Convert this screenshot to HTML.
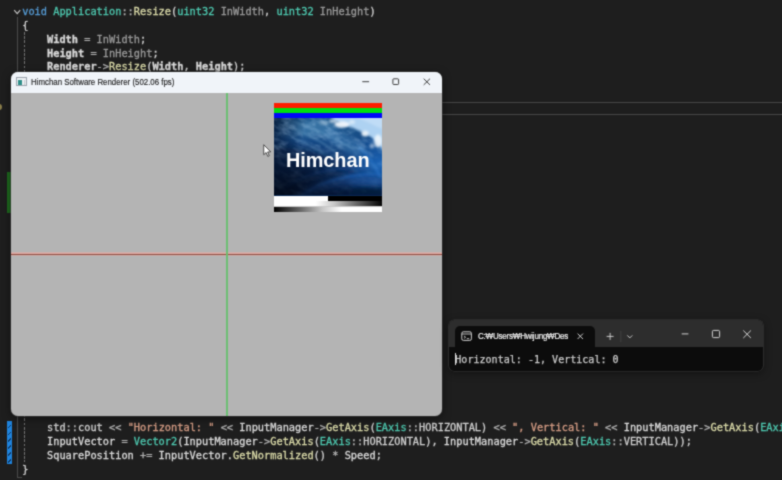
<!DOCTYPE html>
<html lang="en">
<head>
<meta charset="utf-8">
<title>Himchan Software Renderer</title>
<style>
html,body{margin:0;padding:0;}
body{width:782px;height:480px;overflow:hidden;background:#1e1e1e;position:relative;font-family:"Liberation Sans",sans-serif;}
#stage{position:absolute;left:-4px;top:-4px;width:790px;height:488px;overflow:hidden;background:#1e1e1e;filter:url(#soft);}
#in{position:absolute;left:4px;top:4px;width:782px;height:480px;}
.code{position:absolute;left:22.2px;white-space:pre;font-family:"DejaVu Sans Mono","Liberation Mono",monospace;font-size:10.3px;line-height:13.75px;height:13.75px;color:#d4d4d4;letter-spacing:0;-webkit-text-stroke:0.3px currentColor;}
.k{color:#569cd6}.t{color:#4ec9b0}.f{color:#dcdcaa}.p{color:#9a9a9a}.m{color:#dadada;font-weight:bold}.s{color:#d69d85}.o{color:#b4b4b4}.v{color:#d0d0d0}.w{color:#dcdcdc}
.abs{position:absolute}
</style>
</head>
<body>
<svg width="0" height="0" style="position:absolute"><defs><filter id="soft" x="0" y="0" width="100%" height="100%" color-interpolation-filters="sRGB"><feConvolveMatrix order="3" kernelMatrix="1 3 1 3 12 3 1 3 1" divisor="28" edgeMode="duplicate" preserveAlpha="true"/></filter></defs></svg>
<div id="stage"><div id="in">

<!-- editor current-line box -->
<div class="abs" style="left:18px;top:102.2px;width:790px;height:11.3px;border:1px solid #464646;"></div>

<!-- margin indicators -->
<div class="abs" style="left:-4px;top:103.5px;width:6px;height:6.5px;border-radius:50%;background:#8a7d4a;"></div>
<div class="abs" style="left:7px;top:172px;width:4px;height:41px;background:#1e6b1e;"></div>
<div class="abs" style="left:7px;top:421px;width:4.5px;height:42.5px;background:#1f83dc;"><div class="abs" style="left:1px;top:1px;right:1px;bottom:1px;background:repeating-linear-gradient(135deg,#1f83dc 0 3.6px,#0f3a66 3.6px 4.9px);"></div></div>

<!-- structure guide lines -->
<div class="abs" style="left:16.5px;top:17px;width:1px;height:460px;background:#4a4a4a;"></div>
<div class="abs" style="left:16.5px;top:476.5px;width:5px;height:1px;background:#4a4a4a;"></div>
<div class="abs" style="left:24px;top:32px;width:1px;height:430px;background:repeating-linear-gradient(180deg,#727272 0 2.8px,transparent 2.8px 4.2px);"></div>

<!-- fold chevron -->
<svg class="abs" style="left:13px;top:8px" width="9" height="8" viewBox="0 0 9 8"><path d="M1.2 2.2 L4.2 5.6 L7.2 2.2" fill="none" stroke="#c8c8c8" stroke-width="1.1"/></svg>

<!-- code, top -->
<div class="code" style="top:5.30px"><span class="k">void</span> <span class="t">Application</span><span class="o">::</span><span class="f">Resize</span>(<span class="t">uint32</span> <span class="p">InWidth</span>, <span class="t">uint32</span> <span class="p">InHeight</span>)</div>
<div class="code" style="top:19.05px">{</div>
<div class="code" style="top:32.80px">    <span class="m">Width</span> <span class="o">=</span> <span class="p">InWidth</span>;</div>
<div class="code" style="top:46.55px">    <span class="m">Height</span> <span class="o">=</span> <span class="p">InHeight</span>;</div>
<div class="code" style="top:60.30px">    <span class="m">Renderer</span><span class="o">-&gt;</span><span class="f">Resize</span>(<span class="m">Width</span>, <span class="m">Height</span>);</div>

<!-- code, bottom -->
<div class="code" style="top:421.30px">    <span class="v">std</span><span class="o">::</span><span class="v">cout</span> <span class="o">&lt;&lt;</span> <span class="s">"Horizontal: "</span> <span class="o">&lt;&lt;</span> <span class="w">InputManager</span><span class="o">-&gt;</span><span class="f">GetAxis</span>(<span class="t">EAxis</span><span class="o">::</span><span class="v">HORIZONTAL</span>) <span class="o">&lt;&lt;</span> <span class="s">", Vertical: "</span> <span class="o">&lt;&lt;</span> <span class="w">InputManager</span><span class="o">-&gt;</span><span class="f">GetAxis</span>(<span class="t">EAxis</span><span class="o">::</span><span class="v">VERTICAL</span>) <span class="o">&lt;&lt;</span> <span class="v">std</span><span class="o">::</span><span class="f">endl</span>;</div>
<div class="code" style="top:435.10px">    <span class="w">InputVector</span> <span class="o">=</span> <span class="t">Vector2</span>(<span class="w">InputManager</span><span class="o">-&gt;</span><span class="f">GetAxis</span>(<span class="t">EAxis</span><span class="o">::</span><span class="v">HORIZONTAL</span>), <span class="w">InputManager</span><span class="o">-&gt;</span><span class="f">GetAxis</span>(<span class="t">EAxis</span><span class="o">::</span><span class="v">VERTICAL</span>));</div>
<div class="code" style="top:448.90px">    <span class="w">SquarePosition</span> <span class="o">+=</span> <span class="w">InputVector</span>.<span class="f">GetNormalized</span>() <span class="o">*</span> <span class="w">Speed</span>;</div>
<div class="code" style="top:462.70px">}</div>

<!-- Himchan window -->
<div class="abs" id="win" style="left:10.5px;top:72px;width:431.5px;height:344px;border-radius:7px;background:#b4b4b4;overflow:hidden;box-shadow:0 0 0 0.5px #3a3a3a, 0 2px 8px rgba(0,0,0,.5);">
  <div class="abs" style="left:0;top:0;width:100%;height:20.5px;background:#f0f4f9;"></div>
  <!-- app icon -->
  <div class="abs" style="left:5.6px;top:5.2px;width:11px;height:8.8px;background:#eef1f4;border:0.5px solid #9aa3ad;box-sizing:border-box;">
    <div class="abs" style="left:1.4px;top:2.2px;width:3.6px;height:4.8px;background:#2f8f8a;"></div>
    <div class="abs" style="left:7px;top:2.2px;width:1.3px;height:4.8px;background:#c9ced4;"></div>
  </div>
  <div class="abs" style="left:20px;top:4.3px;font-size:8.9px;line-height:12px;color:#1b1b1b;white-space:pre;-webkit-text-stroke:0.15px #1b1b1b;transform:scaleX(0.886);transform-origin:0 50%;">Himchan Software Renderer (502.06 fps)</div>
  <!-- controls -->
  <svg class="abs" style="left:345px;top:0" width="86" height="21" viewBox="0 0 86 21">
    <path d="M6.3 9.7 H13.1" stroke="#2a2a2a" stroke-width="0.9" fill="none"/>
    <rect x="36.9" y="6.8" width="5.7" height="5.7" rx="0.8" fill="none" stroke="#2a2a2a" stroke-width="0.9"/>
    <path d="M67.7 6.7 L74 12.9 M74 6.7 L67.7 12.9" stroke="#2a2a2a" stroke-width="0.9" fill="none"/>
  </svg>
  <!-- axes -->
  <div class="abs" style="left:0;top:180.2px;width:100%;height:4px;background:linear-gradient(180deg,rgba(226,168,160,0.25),#e0aaa2 30%,#e0aaa2 70%,rgba(226,168,160,0.25));"></div>
  <div class="abs" style="left:0;top:181.55px;width:100%;height:1.4px;background:#8e4e44;"></div>
  <div class="abs" style="left:215.3px;top:20.5px;width:2.4px;height:324px;background:linear-gradient(90deg,rgba(104,192,112,0.35),#66c06e 25%,#66c06e 75%,rgba(104,192,112,0.35));opacity:.92;"></div>

  <!-- texture -->
  <div class="abs" id="tex" style="left:263.2px;top:30.5px;width:108.4px;height:109.2px;overflow:hidden;background:#0a2a55;">
    <div class="abs" style="left:0;top:0;width:109px;height:5.2px;background:#ff1c00;"></div>
    <div class="abs" style="left:0;top:5px;width:109px;height:5.5px;background:#00e010;"></div>
    <div class="abs" style="left:0;top:10.5px;width:109px;height:4.8px;background:#0008f8;"></div>
    <svg class="abs" style="left:0;top:15.3px" width="109" height="77.6" viewBox="0 0 109 77.6">
      <defs>
        <linearGradient id="g1" x1="0" y1="0" x2="0" y2="1">
          <stop offset="0" stop-color="#1f5a8c"/><stop offset="0.3" stop-color="#144885"/><stop offset="0.6" stop-color="#0c3166"/><stop offset="1" stop-color="#061c44"/>
        </linearGradient>
        <radialGradient id="g2" cx="0" cy="1" r="0.75">
          <stop offset="0" stop-color="#01050e" stop-opacity=".95"/><stop offset="0.55" stop-color="#020a1c" stop-opacity=".6"/><stop offset="1" stop-color="#020a1c" stop-opacity="0"/>
        </radialGradient>
        <linearGradient id="g4" x1="0" y1="0" x2="1" y2="0.15"><stop offset="0" stop-color="#03122c" stop-opacity=".75"/><stop offset="0.3" stop-color="#03122c" stop-opacity="0"/></linearGradient>
        <radialGradient id="g3" cx="0.98" cy="0.6" r="0.4">
          <stop offset="0" stop-color="#1d6cc4" stop-opacity=".9"/><stop offset="1" stop-color="#1d6cc4" stop-opacity="0"/>
        </radialGradient>
        <filter id="bl" x="-20%" y="-20%" width="140%" height="140%"><feGaussianBlur stdDeviation="2.4"/></filter>
        <filter id="bl2" x="-20%" y="-20%" width="140%" height="140%"><feGaussianBlur stdDeviation="1"/></filter>
        <filter id="tx" x="0" y="0" width="100%" height="100%">
          <feTurbulence type="fractalNoise" baseFrequency="0.09 0.16" numOctaves="3" seed="7"/>
          <feColorMatrix type="matrix" values="0 0 0 0 0.5  0 0 0 0 0.72  0 0 0 0 0.95  1.8 0 0 0 -0.72"/>
          <feGaussianBlur stdDeviation="0.5"/>
        </filter>
        <linearGradient id="mg" x1="0" y1="0" x2="0" y2="1"><stop offset="0" stop-color="#fff"/><stop offset="0.35" stop-color="#bbb"/><stop offset="0.6" stop-color="#444"/><stop offset="1" stop-color="#222"/></linearGradient><mask id="mk"><rect width="109" height="77.6" fill="url(#mg)"/></mask>
        <clipPath id="cp"><rect width="109" height="77.6"/></clipPath>
      </defs>
      <g clip-path="url(#cp)">
      <rect width="109" height="77.6" fill="url(#g1)"/>
      <rect width="109" height="77.6" fill="url(#g3)"/>
      <g filter="url(#bl)">
        <ellipse cx="40" cy="11" rx="22" ry="8" fill="#4f8dbb" opacity=".5"/>
        <ellipse cx="70" cy="24" rx="22" ry="8" fill="#3f7db4" opacity=".55" transform="rotate(28 70 24)"/>
        <path d="M-5 30 C20 28 50 34 80 48 L80 56 C50 46 20 40 -5 44 Z" fill="#0a2c5e" opacity=".7"/>
        <path d="M20 78 C40 62 70 56 109 58 L109 68 C80 64 50 68 36 78 Z" fill="#1c56a0" opacity=".55"/>
        <path d="M60 78 C75 70 90 68 109 70 L109 78 Z" fill="#06183a" opacity=".8"/>
      </g>
      <g filter="url(#bl2)" fill="none" stroke-linecap="round">
        <path d="M4 6 C20 10 40 18 62 34" stroke="#7fb4d8" stroke-width="1.6" opacity=".45"/>
        <path d="M14 2 C34 8 54 16 78 30" stroke="#8cc0e0" stroke-width="1.4" opacity=".4"/>
        <path d="M2 16 C18 18 36 26 52 38" stroke="#5f9cc8" stroke-width="1.6" opacity=".35"/>
        <path d="M30 76 C50 62 76 56 106 56" stroke="#1f62b8" stroke-width="3" opacity=".55"/>
        <path d="M10 70 C30 56 56 50 84 50" stroke="#184f9c" stroke-width="2.4" opacity=".5"/>
        <path d="M86 30 C94 38 100 46 106 58" stroke="#2a78cc" stroke-width="3" opacity=".5"/>
      </g>
      <rect width="109" height="77.6" fill="url(#g2)"/>
      <rect width="109" height="77.6" fill="url(#g4)"/>
      <g mask="url(#mk)"><g transform="rotate(18 54 38)"><rect x="-20" y="-20" width="150" height="120" filter="url(#tx)" opacity=".55"/></g></g>
      <g filter="url(#bl2)">
        <path d="M56 -2 L112 -2 L112 38 C108 30 102 22 94 17 C86 12 76 9 68 6 C63 4 59 1 56 -2 Z" fill="#aed2f2"/>
        <path d="M80 -2 L112 -2 L112 12 C100 8 90 2 80 -2 Z" fill="#c4def6" opacity=".8"/>
      </g>
      <g filter="url(#bl2)" fill="#f2f8fd">
        <ellipse cx="68" cy="6.5" rx="7.5" ry="3.3" opacity=".95"/>
        <ellipse cx="59" cy="3" rx="4" ry="1.8" opacity=".7"/>
        <ellipse cx="78" cy="4" rx="3" ry="2" opacity=".6"/>
        <ellipse cx="91" cy="15.5" rx="3.6" ry="2.8" opacity=".9"/>
        <ellipse cx="104" cy="23" rx="3.8" ry="6.5" opacity=".85"/>
        <ellipse cx="98" cy="28" rx="2.5" ry="2.5" opacity=".5"/>
        <ellipse cx="50" cy="5" rx="5" ry="2" opacity=".3"/>
      </g>
      </g>
    </svg>
    <div class="abs" style="left:12.2px;top:45.6px;width:90px;font-family:'Liberation Sans',sans-serif;font-weight:bold;font-size:19.9px;line-height:24px;color:#fff;letter-spacing:-0.05px;white-space:pre;">Himchan</div>
    <div class="abs" style="left:0;top:93.2px;width:54.5px;height:5.6px;background:#fff;"></div>
    <div class="abs" style="left:54.5px;top:93.2px;width:54.5px;height:5.6px;background:#000;"></div>
    <div class="abs" style="left:0;top:98.6px;width:109px;height:4.6px;background:linear-gradient(90deg,#fff 0%,#fff 38%,#c8c8c8 55%,#6a6a6a 75%,#000 100%);"></div>
    <div class="abs" style="left:0;top:103.2px;width:109px;height:0.9px;background:#c8c8c8;"></div>
    <div class="abs" style="left:0;top:104px;width:109px;height:5.2px;background:linear-gradient(90deg,#000 0%,#6a6a6a 25%,#c8c8c8 45%,#fff 62%,#fff 100%);"></div>
  </div>

  <!-- mouse cursor -->
  <svg class="abs" style="left:252px;top:72.3px" width="9.4" height="14.1" viewBox="0 0 10 15">
    <path d="M0.8 0.8 L0.8 11.4 L3.3 9.1 L5.1 13.2 L6.7 12.5 L4.9 8.5 L8.2 8.3 Z" fill="#fff" stroke="#222" stroke-width="0.8" stroke-linejoin="round"/>
  </svg>
</div>

<!-- Terminal window -->
<div class="abs" id="term" style="left:449px;top:319.5px;width:314px;height:51.5px;border-radius:5.5px;background:#0c0c0c;overflow:hidden;box-shadow:0 0 0 0.6px #3b3b3b, 0 2px 8px rgba(0,0,0,.45);">
  <div class="abs" style="left:0;top:0;width:100%;height:27.2px;background:#2d2d2d;"></div>
  <div class="abs" style="left:6.2px;top:6.2px;width:140px;height:21.2px;background:#0c0c0c;border-radius:5px 5px 0 0;"></div>
  <!-- terminal icon -->
  <svg class="abs" style="left:12px;top:11px" width="12" height="11" viewBox="0 0 12 11">
    <rect x="0.8" y="0.8" width="9.6" height="8.6" rx="1.6" fill="none" stroke="#e6e6e6" stroke-width="0.9"/>
    <path d="M0.8 3 H10.4" stroke="#e6e6e6" stroke-width="0.8"/>
    <path d="M3 5 L4.6 6.2 L3 7.4 M5.8 7.6 H8.2" stroke="#e6e6e6" stroke-width="0.8" fill="none"/>
  </svg>
  <div class="abs" style="left:29px;top:10.3px;width:89.5px;height:12px;overflow:hidden;"><div style="font-size:8.9px;line-height:12px;color:#f4f4f4;white-space:pre;letter-spacing:-0.25px;transform:scaleX(0.905);transform-origin:0 50%;-webkit-text-stroke:0.2px #f4f4f4;">C:₩Users₩Hwijung₩Desktop</div></div>
  <svg class="abs" style="left:120px;top:6px" width="194" height="22" viewBox="0 0 194 22">
    <path d="M8.6 7.6 L14 13 M14 7.6 L8.6 13" stroke="#e0e0e0" stroke-width="0.9" fill="none"/>
    <path d="M37.6 10.4 H44.6 M41.1 6.9 V13.9" stroke="#d8d8d8" stroke-width="0.9" fill="none"/>
    <path d="M51.8 5 V16" stroke="#454545" stroke-width="0.8"/>
    <path d="M58.3 9.4 L60.8 11.9 L63.3 9.4" stroke="#d8d8d8" stroke-width="0.9" fill="none"/>
    <path d="M112.7 7.9 H119.4" stroke="#e4e4e4" stroke-width="0.9"/>
    <rect x="143.4" y="4.4" width="7.2" height="7.2" rx="1.2" fill="none" stroke="#e4e4e4" stroke-width="0.9"/>
    <path d="M174.3 4.5 L181.9 12 M181.9 4.5 L174.3 12" stroke="#e4e4e4" stroke-width="0.9" fill="none"/>
  </svg>
  <div class="abs" style="left:6.3px;top:33px;font-family:'DejaVu Sans Mono','Liberation Mono',monospace;font-size:10.05px;line-height:13px;color:#cccccc;white-space:pre;-webkit-text-stroke:0.25px #cccccc;">Horizontal: -1, Vertical: 0</div>
  <div class="abs" style="left:6.2px;top:33.5px;width:0.9px;height:11.5px;background:#e0e0e0;"></div>
</div>

</div></div>
</body>
</html>
